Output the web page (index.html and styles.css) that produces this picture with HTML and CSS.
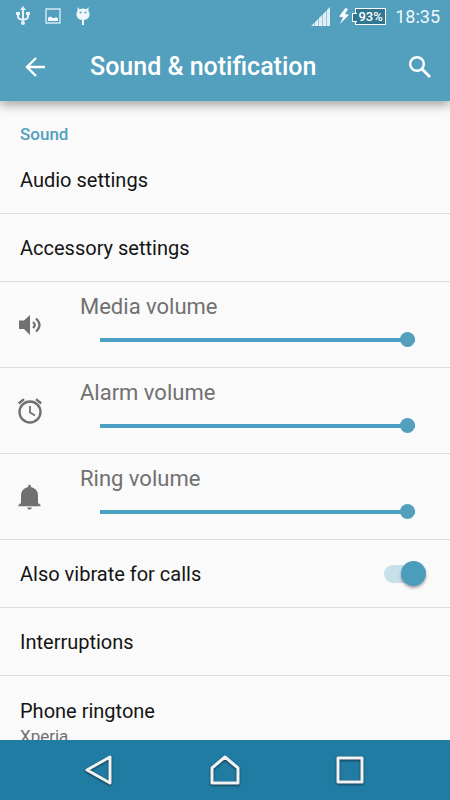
FILE: index.html
```html
<!DOCTYPE html>
<html lang="en">
<head>
    <meta charset="UTF-8">
    <meta name="viewport" content="width=device-width, initial-scale=1.0">
    <title>Sound &amp; notification</title>
    <link rel="stylesheet" href="styles.css">
</head>
<body>
    <header class="top">
        <div class="status-bar">
            <div class="status-icons">
                <svg width="14" height="20" viewBox="0 0 14 20" fill="none" stroke="#e6f2f7" stroke-width="2">
                    <path d="M7 4v13M2 8v3q0 2 5 3M12 7v4q0 2-5 3"/>
                    <path d="M7 0l3 4H4zM0 6h4v3H0zM10 6h4v3h-4z" fill="#e6f2f7" stroke="none"/>
                    <circle cx="7" cy="17" r="2" fill="#e6f2f7" stroke="none"/>
                </svg>
                <svg width="16" height="16" viewBox="0 0 16 16">
                    <path d="M1 1h14v14H1z" fill="none" stroke="#d5e8f0" stroke-width="1.4"/>
                    <path d="M3 13V9.500l3-1 1.500 1.500h2L11 9l2 1.500V13z" fill="#f2f8fb"/>
                </svg>
                <svg width="14" height="20" viewBox="0 0 14 20" fill="#f0f7fa">
                    <path d="M1.500 1l2 2.300Q7 1.500 10.500 3.300L12.500 1v4q1.500 2 1 4.500Q12 14 7 14T.5 9.500Q0 7 1.500 5z"/>
                    <path d="M6 14h2v5H6z"/>
                    <circle cx="4.500" cy="6.500" r="1" fill="#529fbe"/>
                    <circle cx="9.500" cy="6.500" r="1" fill="#529fbe"/>
                </svg>
            </div>
            <div class="status-info">
                <svg width="19" height="19" viewBox="0 0 19 19" fill="#e2f0f6">
                    <path d="M0 19l3.500-3.500V19zM4 19v-4l3.500-3.500V19zM8 19v-8l3.500-3.500V19zM12 19V7l3.500-3.500V19zM16 19V3l3-3v19z"/>
                </svg>
                <svg class="bolt" width="10" height="16" viewBox="0 0 10 16" fill="#fff">
                    <path d="M6.500 0L0 8.500l4 .8L1 16l9-9.200-4-.8L9 1z"/>
                </svg>
                <span class="battery">93%</span>
                <time class="clock">18:35</time>
            </div>
        </div>
        <div class="app-bar">
            <button class="icon-button" type="button" aria-label="Back">
                <svg width="20" height="20" viewBox="0 0 20 20" fill="none" stroke="#fff" stroke-width="2.400">
                    <path d="M20 10H2M11 1l-9 9 9 9"/>
                </svg>
            </button>
            <h1>Sound &amp; notification</h1>
            <button class="icon-button" type="button" aria-label="Search">
                <svg width="22" height="22" viewBox="0 0 22 22" fill="none" stroke="#fff" stroke-width="2.400">
                    <circle cx="8" cy="8" r="6.800"/>
                    <path d="M12.700 12.700l8.300 8.300" stroke-width="2.800"/>
                </svg>
            </button>
        </div>
    </header>

    <main class="settings">
        <h2>Sound</h2>
        <a class="row" href="#audio">Audio settings</a>
        <a class="row" href="#accessory">Accessory settings</a>
        <div class="row volume">
            <svg width="24" height="24" viewBox="0 0 24 24" fill="#707070">
                <path d="M1 7.500h5L12 2v20l-6-6H1z"/>
                <path d="M15 9q3.500 3 0 6M18 5.500q7 6.500 0 13" fill="none" stroke="#707070" stroke-width="2.300"/>
            </svg>
            <div class="volume-body">
                <label for="media">Media volume</label>
                <input type="range" id="media" min="0" max="15" value="15">
            </div>
        </div>
        <div class="row volume">
            <svg width="24" height="26" viewBox="0 0 24 26" fill="none" stroke="#707070" stroke-width="2.400">
                <circle cx="12" cy="14" r="10.500"/>
                <path d="M12 8v6.500l5 3" stroke-width="1.800"/>
                <path d="M.8 5.500L6 1.200M23.200 5.500L18 1.200"/>
            </svg>
            <div class="volume-body">
                <label for="alarm">Alarm volume</label>
                <input type="range" id="alarm" min="0" max="7" value="7">
            </div>
        </div>
        <div class="row volume">
            <svg width="24" height="26" viewBox="0 0 24 26" fill="#707070">
                <path d="M10 3q0-2.500 1.500-2.500T13 3q7 1.500 7 9v7l2.500 2v1.200H.5V21L3 19v-7q0-7.500 7-9zM9 23.500h5q-.5 2-2.500 2T9 23.500z"/>
            </svg>
            <div class="volume-body">
                <label for="ring">Ring volume</label>
                <input type="range" id="ring" min="0" max="7" value="7">
            </div>
        </div>
        <div class="row">
            <label for="vibrate">Also vibrate for calls</label>
            <input class="switch" type="checkbox" role="switch" id="vibrate" checked>
        </div>
        <a class="row" href="#interruptions">Interruptions</a>
        <a class="row ringtone" href="#ringtone">
            <span>Phone ringtone</span>
            <span class="summary">Xperia</span>
        </a>
    </main>

    <nav class="nav-bar">
        <button class="nav-button" type="button" aria-label="Back">
            <svg width="30" height="32" viewBox="0 0 30 32">
                <path d="M2 16L25 3v26z"/>
            </svg>
        </button>
        <button class="nav-button" type="button" aria-label="Home">
            <svg width="32" height="32" viewBox="0 0 32 32">
                <path d="M3 14L16 3l13 11v15H3z"/>
            </svg>
        </button>
        <button class="nav-button" type="button" aria-label="Recent apps">
            <svg width="30" height="30" viewBox="0 0 30 30">
                <path d="M3 3h24v24H3z"/>
            </svg>
        </button>
    </nav>
</body>
</html>
```

FILE: styles.css
```css
* {
    box-sizing: border-box;
}
body {
    font-family: Roboto, "Liberation Sans", sans-serif;
    font-size: 20px;
    color: #141414;
    background-color: #fafafa;
    margin: 0;
    height: 100vh;
    display: flex;
    flex-direction: column;
}
button {
    background: none;
    border: 0;
    padding: 0;
}
svg {
    display: block;
    flex-shrink: 0;
}

/* Header */
.top {
    background-color: #529fbe;
    color: #fff;
    box-shadow: 0 4px 10px rgba(0,0,0,0.35);
    z-index: 1;
}
.status-bar {
    display: flex;
    justify-content: space-between;
    height: 32px;
    padding: 0 10px 0 16px;
}
.status-icons,
.status-info {
    display: flex;
    align-items: center;
}
.status-icons {
    gap: 15px;
}
.bolt {
    margin: 0 6px 0 9px;
}
.battery {
    position: relative;
    width: 31px;
    height: 17px;
    border: 1px solid #fff;
    background-color: #31768f;
    font-size: 13px;
    font-weight: 500;
    line-height: 15px;
    text-align: center;
}
.battery::before {
    content: "";
    position: absolute;
    left: -4px;
    top: 4px;
    width: 4px;
    height: 7px;
    border: 1px solid #fff;
    border-right: 0;
    background-color: #31768f;
}
.clock {
    margin-left: 9px;
    font-size: 18px;
    color: #eef7fb;
}
.app-bar {
    display: flex;
    align-items: center;
    height: 69px;
    padding: 0 15px 0 20px;
}
.icon-button {
    width: 30px;
    height: 48px;
    display: flex;
    align-items: center;
    justify-content: center;
}
h1 {
    flex: 1;
    margin: 0 0 0 40px;
    font-size: 25px;
    font-weight: 500;
    line-height: 32px;
}

/* Settings list */
.settings {
    flex: 1;
    min-height: 0;
    overflow: hidden;
}
h2 {
    margin: 0;
    padding: 22px 20px 1px;
    font-size: 17px;
    font-weight: 500;
    line-height: 22px;
    color: #529fbe;
}
.row {
    display: flex;
    align-items: center;
    justify-content: space-between;
    height: 68px;
    padding: 0 20px;
    border-bottom: 1px solid #dcdcdc;
    color: inherit;
    text-decoration: none;
}
.volume {
    justify-content: flex-start;
    height: 86px;
    padding: 0 35px 0 18px;
}
.volume-body {
    flex: 1;
    display: flex;
    flex-direction: column;
    gap: 11px;
    margin-left: 38px;
    padding-bottom: 9px;
}
.volume label {
    font-size: 22px;
    line-height: 28px;
    color: #707070;
}
.volume input {
    appearance: none;
    height: 15px;
    margin: 0 0 0 20px;
    background: linear-gradient(#4a9fc2, #4a9fc2) center / 100% 4px no-repeat;
}
.volume input::-webkit-slider-thumb {
    appearance: none;
    width: 15px;
    height: 15px;
    border-radius: 50%;
    background-color: #529fbe;
}
.switch {
    appearance: none;
    display: flex;
    align-items: center;
    justify-content: flex-end;
    width: 42px;
    height: 18px;
    margin: 0 4px 0 0;
    border-radius: 9px;
    background-color: #c7e0ea;
}
.switch::before {
    content: "";
    width: 25px;
    height: 25px;
    border-radius: 50%;
    background-color: #4c9cbc;
    box-shadow: 0 2px 3px rgba(0,0,0,0.35);
}
.switch:not(:checked) {
    justify-content: flex-start;
}
.ringtone {
    flex-direction: column;
    align-items: flex-start;
    justify-content: flex-start;
    height: 86px;
    padding-top: 23px;
}
.summary {
    margin-top: 3px;
    font-size: 17px;
    color: #707070;
}

/* Navigation bar */
.nav-bar {
    display: flex;
    align-items: center;
    justify-content: center;
    gap: 65px;
    height: 60px;
    background-color: #217ca3;
}
.nav-button {
    width: 60px;
    height: 60px;
    display: flex;
    align-items: center;
    justify-content: center;
}
.nav-button path {
    fill: none;
    stroke: #f2f2f2;
    stroke-width: 3;
    stroke-linejoin: round;
}
.nav-button svg {
    filter: drop-shadow(0 1px 1px rgba(0,0,0,0.6));
}
```
